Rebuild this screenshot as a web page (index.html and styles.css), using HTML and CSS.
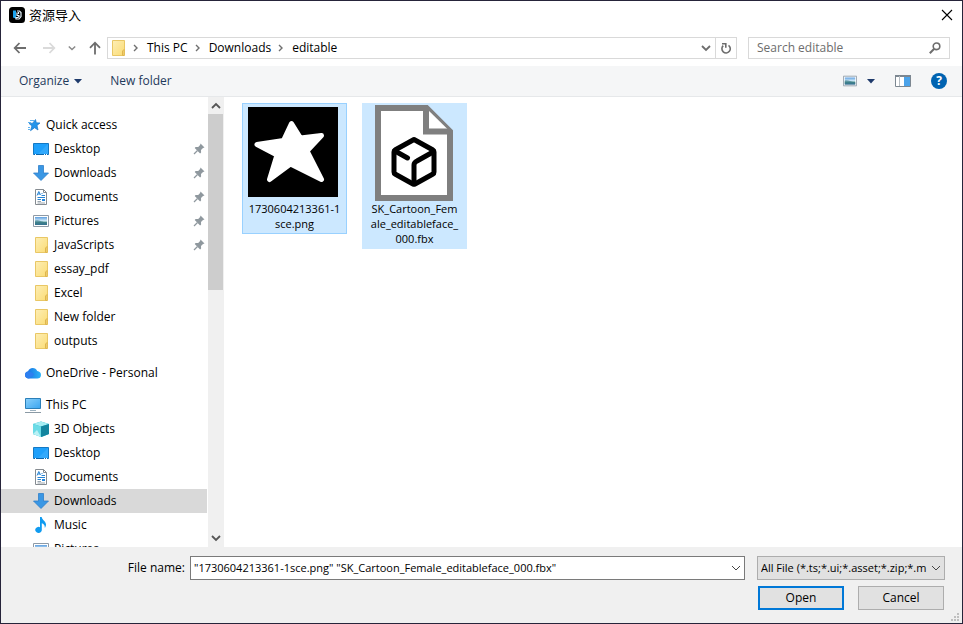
FILE: index.html
```html
<!DOCTYPE html>
<html lang="en">
<head>
<meta charset="utf-8">
<title>资源导入</title>
<link rel="stylesheet" href="styles.css">
</head>
<body>
<svg class="defs" aria-hidden="true">
  <defs>
    <linearGradient id="g-folder" x1="0" y1="0" x2="1" y2="1"><stop offset="0" stop-color="#fdeeb6"/><stop offset="1" stop-color="#fbdc74"/></linearGradient>
    <linearGradient id="g-sky" x1="0" y1="0" x2="0" y2="1"><stop offset="0" stop-color="#5f9fe0"/><stop offset=".5" stop-color="#d8effa"/><stop offset=".65" stop-color="#4f8f86"/><stop offset="1" stop-color="#2f5f9a"/></linearGradient>
    <linearGradient id="g-pc" x1="0" y1="0" x2="1" y2="1"><stop offset="0" stop-color="#8ad0fb"/><stop offset="1" stop-color="#39a5f0"/></linearGradient>
    <linearGradient id="g-cloud" x1="0" y1="0" x2="1" y2="0"><stop offset="0" stop-color="#1568e0"/><stop offset="1" stop-color="#2cb4f7"/></linearGradient>
    <symbol id="i-folder" viewBox="0 0 16 16"><path d="M2.500.5h12v15h-12z" fill="url(#g-folder)" stroke="#e9c765"/><path d="M12.500 15.500v-4.500l1.500-1.500v6z" fill="#fbe08a" stroke="#dfb64e"/></symbol>
    <symbol id="i-star" viewBox="0 0 16 16"><path d="M10.500 2.500l.8 3.300 3.700.2-3 2.400 1 4.600-3.400-2.300-4.100 3 1.400-4.700-2.900-2.600 3.700-.2z" fill="#2495ea" stroke="#1879cb" stroke-width=".7"/><path d="M5 3.500h4M3 5.500h3M3 10.500h2M3 12.500h2" stroke="#62b4ef"/></symbol>
    <symbol id="i-desktop" viewBox="0 0 16 16"><path d="M.5 2.500h15v11H.5z" fill="#1ea0fb" stroke="#1479c4"/><path d="M15 3v10H5z" fill="#45b2fd" opacity=".5"/><path d="M1 13.500h14" stroke="#0b66ad"/><path d="M2 13.500h1M11 13.500h1M13 13.500h1" stroke="#fff"/></symbol>
    <symbol id="i-down" viewBox="0 0 16 16"><path d="M5.500.5h5v7.500h5L8 15.500.5 8h5z" fill="#3a97e4" stroke="#2f7fca" stroke-width=".8"/></symbol>
    <symbol id="i-doc" viewBox="0 0 16 16"><path d="M2.500.5h8l3 3v12h-11z" fill="#fff" stroke="#858b91"/><path d="M10.500.5v3h3" fill="none" stroke="#858b91"/><path d="M4 6.500l1.800-4L7.500 6M5 5h2M8.500 4.500h1M4.500 8.500H12M4.500 10.500H8M8.500 6.500H12" fill="none" stroke="#2583d4"/><path d="M9 10h3v2H9z" fill="#2385dc"/><path d="M4.500 12.500H8M4.500 14H12" stroke="#9ba5ad"/></symbol>
    <symbol id="i-pic" viewBox="0 0 16 16"><path d="M.5 2.500h15v11H.5z" fill="#fff" stroke="#8e9aa6"/><path d="M2 4h12v8H2z" fill="url(#g-sky)"/><path d="M2 7.500c4-1 6 1.500 12 2V12H2z" fill="#397c8c" opacity=".65"/></symbol>
    <symbol id="i-cloud" viewBox="0 0 16 16"><path d="M4 13.500C1.500 13.500 0 12 0 10c0-1.900 1.400-3.200 3-3.400C3.600 4.200 5.500 3 7.700 3c2.100 0 3.800 1.200 4.500 3.100 2.300.2 3.800 1.700 3.800 3.800 0 2.200-1.600 3.600-3.700 3.600z" fill="url(#g-cloud)"/><path d="M3 6.600c2.500-.2 4 1.200 6.500 3L4 13.500C1.500 13.500 0 12 0 10c0-1.900 1.400-3.200 3-3.400z" fill="#2d7ff0"/></symbol>
    <symbol id="i-pc" viewBox="0 0 16 16"><path d="M.5 1.500h15v10H.5z" fill="url(#g-pc)" stroke="#2b7fb8"/><path d="M5 13.500h6" stroke="#9db2c0"/><path d="M0 15.500h16" stroke="#8b9aa5"/></symbol>
    <symbol id="i-cube" viewBox="0 0 16 16"><path d="M8 .5l8 2.500v10l-7.500 3L0 13V3z" fill="#22b3c8"/><path d="M8 .5L16 3 8 5.500 0 3z" fill="#a5edf3"/><path d="M0 3l8 2.500V16l-8-3z" fill="#6bdbe6"/><path d="M8 5.500L16 3v10l-8 3z" fill="#12859f"/><path d="M0 13l4-4 4 7z" fill="#b9f1f5"/></symbol>
    <symbol id="i-music" viewBox="0 0 16 16"><path d="M7 0h1.700c.5 3.300 4.300 4.300 4.300 7.600 0 1.300-.5 2.500-1.200 3.400.2-2.800-1-4-3-4.700v6.200A3.300 3 0 1 1 7 10.200z" fill="#109bf0"/></symbol>
    <symbol id="i-pin" viewBox="0 0 12 12"><path d="M7.500.5l4 4-1.500.6-2 2 .1 2.400-1 .9L1.700 5l.9-1 2.600.1 1.900-2z" fill="#8f989e"/><path d="M4.500 7.500L1 11" stroke="#8f989e" stroke-width="1.200"/></symbol>
    <symbol id="i-chev" viewBox="0 0 10 10"><path d="M1 3l4 4 4-4" fill="none" stroke="currentColor"/></symbol>
    <symbol id="i-chevb" viewBox="0 0 10 10"><path d="M1 3l4 4 4-4" fill="none" stroke="currentColor" stroke-width="1.800"/></symbol>
    <symbol id="i-sep" viewBox="0 0 6 10"><path d="M1 2l3 3-3 3" fill="none" stroke="#6f6f6f" stroke-width="1.400"/></symbol>
    <symbol id="i-tri" viewBox="0 0 8 5"><path d="M0 0h8L4 4.500z" fill="#1e3a6b"/></symbol>
  </defs>
</svg>
<main class="dialog">
  <header class="titlebar">
    <svg class="icon16" viewBox="0 0 16 16"><rect width="16" height="16" rx="3.500" fill="#000"/><path d="M4 3.500h3v8l-3-1z" fill="#1ca4ee"/><path d="M8 4h2.500L12 5.500v4L10 12H7v-1.500h2L10.500 9M8 5.500v3h2.500M9.500 5v2" fill="none" stroke="#e8f7ff" stroke-width="1.200"/></svg>
    <h1 class="title">资源导入</h1>
    <button class="plain" aria-label="Close"><svg class="icon12" viewBox="0 0 12 12"><path d="M1 1l10 10M11 1L1 11" stroke="#000" stroke-width="1.100"/></svg></button>
  </header>

  <nav class="navbar" aria-label="Location">
    <div class="history">
      <button class="plain" aria-label="Back"><svg class="icon14" viewBox="0 0 14 14"><path d="M13 7H2M6.500 2L1.700 7l4.800 5" fill="none" stroke="#6d6d6d" stroke-width="1.800"/></svg></button>
      <button class="plain" aria-label="Forward" disabled><svg class="icon14" viewBox="0 0 14 14"><path d="M1 7h11M7.500 2l4.800 5-4.800 5" fill="none" stroke="#dadada" stroke-width="1.800"/></svg></button>
      <button class="plain recent" aria-label="Recent locations"><svg class="icon8"><use href="#i-chevb"/></svg></button>
      <button class="plain" aria-label="Up"><svg class="icon14" viewBox="0 0 14 14"><path d="M7 13.500V2M2 6.800L7 1.700l5 5.100" fill="none" stroke="#6d6d6d" stroke-width="1.800"/></svg></button>
    </div>
    <div class="address">
      <svg class="icon16"><use href="#i-folder"/></svg>
      <ol class="crumbs">
        <li><svg class="sep"><use href="#i-sep"/></svg><a href="#pc">This PC</a></li>
        <li><svg class="sep"><use href="#i-sep"/></svg><a href="#downloads">Downloads</a></li>
        <li><svg class="sep"><use href="#i-sep"/></svg><a href="#editable">editable</a></li>
      </ol>
      <button class="plain gray" aria-label="Previous locations"><svg class="icon10"><use href="#i-chevb"/></svg></button>
      <button class="plain refresh" aria-label="Refresh"><svg class="icon12" viewBox="0 0 12 12"><path d="M8.500 3.300A4.200 4.200 0 1 1 3.200 3.700" fill="none" stroke="#6d6d6d" stroke-width="1.600"/><path d="M2 1.700h3.800v4" fill="none" stroke="#6d6d6d" stroke-width="1.600"/></svg></button>
    </div>
    <div class="search">
      <input type="search" aria-label="Search editable" placeholder="Search editable">
      <svg class="icon12" viewBox="0 0 12 12"><circle cx="7.500" cy="4.300" r="3.300" fill="none" stroke="#6d6d6d" stroke-width="1.600"/><path d="M5.200 6.800L.8 11.200" stroke="#6d6d6d" stroke-width="2"/></svg>
    </div>
  </nav>

  <div class="toolbar">
    <button class="plain">Organize <svg class="tri"><use href="#i-tri"/></svg></button>
    <button class="plain">New folder</button>
    <div class="tools">
      <button class="plain view" aria-label="Change view"><svg class="icon14" viewBox="0 0 16 16"><use href="#i-pic"/></svg><svg class="tri"><use href="#i-tri"/></svg></button>
      <button class="plain" aria-label="Preview pane"><svg class="icon16" viewBox="0 0 16 16"><path d="M.5 2.500h15v11H.5z" fill="#fff" stroke="#7c8791"/><path d="M0 3h16" stroke="#7c8791" stroke-width="2"/><path d="M4.500 3v10" stroke="#b5bcc2"/><path d="M9 4h6v9H9z" fill="#4ba3ea"/></svg></button>
      <button class="help" aria-label="Help">?</button>
    </div>
  </div>

  <div class="body">
    <aside class="sidebar">
      <ul class="tree">
        <li class="root"><svg class="icon16"><use href="#i-star"/></svg>Quick access</li>
        <li><svg class="icon16"><use href="#i-desktop"/></svg>Desktop<svg class="pin"><use href="#i-pin"/></svg></li>
        <li><svg class="icon16"><use href="#i-down"/></svg>Downloads<svg class="pin"><use href="#i-pin"/></svg></li>
        <li><svg class="icon16"><use href="#i-doc"/></svg>Documents<svg class="pin"><use href="#i-pin"/></svg></li>
        <li><svg class="icon16"><use href="#i-pic"/></svg>Pictures<svg class="pin"><use href="#i-pin"/></svg></li>
        <li><svg class="icon16"><use href="#i-folder"/></svg>JavaScripts<svg class="pin"><use href="#i-pin"/></svg></li>
        <li><svg class="icon16"><use href="#i-folder"/></svg>essay_pdf</li>
        <li><svg class="icon16"><use href="#i-folder"/></svg>Excel</li>
        <li><svg class="icon16"><use href="#i-folder"/></svg>New folder</li>
        <li><svg class="icon16"><use href="#i-folder"/></svg>outputs</li>
      </ul>
      <ul class="tree">
        <li class="root"><svg class="icon16"><use href="#i-cloud"/></svg>OneDrive - Personal</li>
      </ul>
      <ul class="tree">
        <li class="root"><svg class="icon16"><use href="#i-pc"/></svg>This PC</li>
        <li><svg class="icon16"><use href="#i-cube"/></svg>3D Objects</li>
        <li><svg class="icon16"><use href="#i-desktop"/></svg>Desktop</li>
        <li><svg class="icon16"><use href="#i-doc"/></svg>Documents</li>
        <li class="current"><svg class="icon16"><use href="#i-down"/></svg>Downloads</li>
        <li><svg class="icon16"><use href="#i-music"/></svg>Music</li>
        <li><svg class="icon16"><use href="#i-pic"/></svg>Pictures</li>
      </ul>
    </aside>
    <div class="scrollbar">
      <svg class="icon10 up"><use href="#i-chevb"/></svg>
      <div class="track"><div class="thumb"></div></div>
      <svg class="icon10"><use href="#i-chevb"/></svg>
    </div>
    <section class="files" aria-label="Files">
      <figure class="file focused">
        <svg class="shot" viewBox="0 0 90 90"><path d="M0 0h90v90H0z" fill="#000"/><path d="M43.500 16.500l9 14.500 21-2.500-14.500 15.500 14.500 28.500-31-15.500-21 15.500 7.500-24.500-20-10.500 26.500-4z" fill="#fff" stroke="#fff" stroke-width="5" stroke-linejoin="round"/></svg>
        <figcaption>1730604213361-1<br>sce.png</figcaption>
      </figure>
      <figure class="file">
        <svg class="page" viewBox="0 0 78 96"><path d="M3 3h48.500L75 26.500V93H3z" fill="#fff" stroke="#7f7f7f" stroke-width="6"/><path d="M51 3v23.500h24" fill="#fff" stroke="#7f7f7f" stroke-width="6"/><g fill="none" stroke="#000" stroke-width="5" stroke-linejoin="round" stroke-linecap="round"><path d="M39 34.500L58 45q1 .5 1 2v20q0 1.500-1 2L40 79q-1 .5-2 0L20 69q-1-.5-1-2V47q0-1.500 1-2z"/><path d="M20 46l12.500 7M58 47l-16 9q-3 1.500-3 4v18"/></g></svg>
        <figcaption>SK_Cartoon_Fem<br>ale_editableface_<br>000.fbx</figcaption>
      </figure>
    </section>
  </div>

  <form class="footer">
    <label class="name-label" for="filename">File name:</label>
    <div class="combo">
      <input id="filename" type="text" value="&quot;1730604213361-1sce.png&quot; &quot;SK_Cartoon_Female_editableface_000.fbx&quot;">
      <svg class="icon10"><use href="#i-chev"/></svg>
    </div>
    <div class="filter">
      <select aria-label="File type"><option>All File (*.ts;*.ui;*.asset;*.zip;*.m</option></select>
      <svg class="icon10"><use href="#i-chev"/></svg>
    </div>
    <div class="actions">
      <button class="btn primary" type="button">Open</button>
      <button class="btn" type="button">Cancel</button>
    </div>
    <svg class="grip" viewBox="0 0 8 8"><path d="M6 0h2v2H6zM3 3h2v2H3zM6 3h2v2H6zM0 6h2v2H0zM3 6h2v2H3zM6 6h2v2H6z" fill="#bfbfbf"/></svg>
  </form>
</main>
</body>
</html>
```

FILE: styles.css
```css
* { box-sizing: border-box; }

body {
  margin: 0;
  font: 12px/16px "Open Sans", "Noto Sans", "Noto Sans CJK SC", sans-serif;
  color: #000;
}

button, input, select { font: inherit; color: inherit; margin: 0; }
svg { flex: none; display: block; }
ul, ol { list-style: none; margin: 0; padding: 0; }
a { color: inherit; text-decoration: none; }

.defs { position: absolute; width: 0; height: 0; }
.icon8 { width: 8px; height: 8px; }
.icon10 { width: 10px; height: 10px; }
.icon12 { width: 12px; height: 12px; }
.icon14 { width: 14px; height: 14px; }
.icon16 { width: 16px; height: 16px; }
.tri { width: 8px; height: 5px; }

.plain {
  display: flex;
  align-items: center;
  border: 0;
  padding: 0;
  background: none;
}
.gray { color: #6d6d6d; }

.dialog {
  display: flex;
  flex-direction: column;
  height: 100vh;
  border: 1px solid #26243a;
  background: #fff;
}

/* Title bar */
.titlebar {
  display: flex;
  align-items: center;
  gap: 4px;
  height: 28px;
  padding: 0 9px 0 8px;
}
.title {
  flex: 1;
  margin: 0;
  font: 13px/16px "Noto Sans CJK SC", sans-serif;
}

/* Navigation */
.navbar {
  display: flex;
  align-items: center;
  gap: 11px;
  height: 37px;
  padding: 0 12px;
}
.history {
  display: flex;
  align-items: center;
  gap: 15px;
  width: 83px;
}
.recent { margin: 0 -3px; color: #8a8a8a; }
.address, .search {
  display: flex;
  align-items: center;
  height: 22px;
  border: 1px solid #d9d9d9;
}
.address { flex: 1; padding-left: 2px; }
.crumbs { display: flex; flex: 1; padding-left: 7px; }
.crumbs li { display: flex; align-items: center; gap: 8px; margin-right: 7px; }
.sep { width: 6px; height: 10px; }
.refresh {
  align-self: stretch;
  justify-content: center;
  width: 21px;
  margin-left: 4px;
  border-left: 1px solid #d9d9d9;
}
.search { flex: 0 0 202px; padding: 0 8px; }
.search input {
  flex: 1;
  min-width: 0;
  border: 0;
  padding: 0;
  outline: 0;
  background: none;
}
.search input::placeholder { color: #6d6d6d; opacity: 1; }

/* Command bar */
.toolbar {
  display: flex;
  align-items: center;
  gap: 28px;
  height: 31px;
  padding: 0 15px 0 18px;
  border-bottom: 1px solid #e6e8ea;
  background: #f5f6f7;
  color: #1e395b;
}
.toolbar .plain { gap: 5px; }
.tools { display: flex; align-items: center; gap: 20px; margin-left: auto; }
.toolbar .view { gap: 10px; }
.help {
  width: 16px;
  height: 16px;
  border: 0;
  border-radius: 50%;
  padding: 0;
  background: #0063b1;
  color: #fff;
  font-weight: 700;
  line-height: 16px;
}

/* Folder tree and files */
.body { display: flex; flex: 1; min-height: 0; }
.sidebar {
  flex: 0 0 207px;
  padding: 16px 1px 0 0;
  overflow: hidden;
}
.tree { margin-bottom: 8px; }
.tree li {
  display: flex;
  align-items: center;
  gap: 5px;
  height: 24px;
  padding: 0 2px 0 32px;
}
.tree .root { padding-left: 24px; }
.tree .current { background: #d9d9d9; }
.pin { width: 12px; height: 12px; margin-left: auto; }

.scrollbar {
  display: flex;
  flex: 0 0 16px;
  flex-direction: column;
  align-items: center;
  padding: 4px 0;
  background: #f0f0f0;
  color: #555;
}
.up { transform: rotate(180deg); }
.track { align-self: stretch; flex: 1; padding: 3px 1px 0 0; }
.thumb { height: 42%; background: #cdcdcd; }

.files {
  display: flex;
  flex: 1;
  align-items: flex-start;
  gap: 15px;
  padding: 6px 18px;
}
.file {
  width: 105px;
  margin: 0;
  border: 1px solid #cce8ff;
  background: #cce8ff;
  text-align: center;
  font-size: 11px;
  line-height: 15px;
  padding-bottom: 2px;
}
.focused { border-color: #99d1ff; }
.shot { width: 90px; height: 90px; margin: 3px 0 4px 5px; }
.page { width: 78px; height: 96px; margin: 1px 0 0 12px; }

/* File name and actions */
.footer {
  position: relative;
  display: grid;
  grid-template-columns: 184px 1fr 188px;
  column-gap: 12px;
  row-gap: 6px;
  align-items: center;
  height: 76px;
  padding: 9px 17px 13px 0;
  background: #f0f0f0;
}
.name-label { text-align: right; }
.combo, .filter { display: flex; align-items: center; font-size: 11px; }
.combo {
  height: 24px;
  margin-left: -7px;
  padding: 0 3px;
  border: 1px solid #7a7a7a;
  background: #fff;
}
.combo input {
  flex: 1;
  min-width: 0;
  border: 0;
  padding: 0;
  outline: 0;
  background: none;
}
.filter {
  height: 24px;
  border: 1px solid #adadad;
  background: #e1e1e1;
  padding: 0 3px;
}
.filter select {
  flex: 1;
  min-width: 0;
  border: 0;
  padding: 0;
  appearance: none;
  background: none;
}
.combo svg, .filter svg { color: #444; }
.actions {
  grid-column: 3;
  display: flex;
  justify-content: space-between;
  padding: 0 1px;
}
.btn {
  width: 86px;
  height: 24px;
  border: 1px solid #adadad;
  padding: 0;
  background: #e1e1e1;
}
.primary { border: 2px solid #0078d7; }
.grip { position: absolute; right: 3px; bottom: 2px; width: 8px; height: 8px; }
```
